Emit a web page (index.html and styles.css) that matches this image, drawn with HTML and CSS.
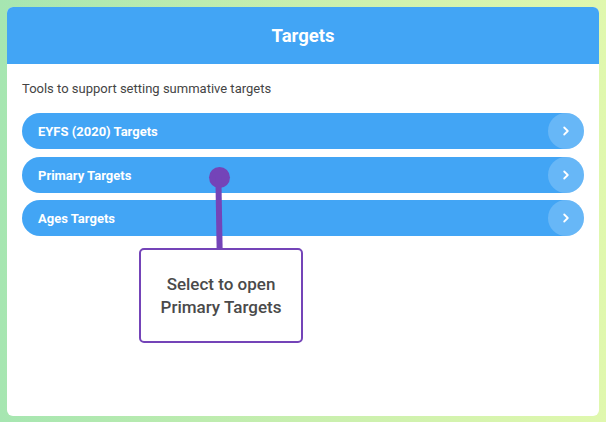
FILE: index.html
```html
<!DOCTYPE html>
<html lang="en">
<head>
    <meta charset="UTF-8">
    <title>Targets</title>
    <link rel="stylesheet" href="styles.css">
</head>
<body>
    <div class="card">
        <div class="card-header">Targets</div>
        <div class="card-body">
            <p class="intro">Tools to support setting summative targets</p>
            <div class="target-list">
                <a class="target-btn" href="#">
                    <span>EYFS (2020) Targets</span>
                    <span class="chevron"><svg width="12" height="12" viewBox="0 0 12 12"><path d="M4.2 2.5 L7.8 6 L4.2 9.5" fill="none" stroke="white" stroke-width="1.8" stroke-linecap="round" stroke-linejoin="round"/></svg></span>
                </a>
                <a class="target-btn" href="#">
                    <span>Primary Targets</span>
                    <span class="chevron"><svg width="12" height="12" viewBox="0 0 12 12"><path d="M4.2 2.5 L7.8 6 L4.2 9.5" fill="none" stroke="white" stroke-width="1.8" stroke-linecap="round" stroke-linejoin="round"/></svg></span>
                </a>
                <a class="target-btn" href="#">
                    <span>Ages Targets</span>
                    <span class="chevron"><svg width="12" height="12" viewBox="0 0 12 12"><path d="M4.2 2.5 L7.8 6 L4.2 9.5" fill="none" stroke="white" stroke-width="1.8" stroke-linecap="round" stroke-linejoin="round"/></svg></span>
                </a>
            </div>
        </div>

        <!-- callout pointing at Primary Targets -->
        <div class="pin-dot"></div>
        <div class="pin-line"></div>
        <div class="callout">Select to open<br>Primary Targets</div>
    </div>
</body>
</html>
```

FILE: styles.css
```css
body {
    margin: 0;
    padding: 7px;
    height: 422px;
    box-sizing: border-box;
    background: linear-gradient(90deg, #a6e6b1 0%, #c8efae 50%, #e0f8ae 100%);
    font-family: Roboto, "Liberation Sans", sans-serif;
}

.card {
    position: relative;
    height: 409px;
    background-color: #fff;
    border-radius: 6px;
    overflow: hidden;
}

.card-header {
    height: 57px;
    background-color: #42a5f5;
    color: #fff;
    font-size: 18.5px;
    font-weight: bold;
    display: flex;
    align-items: center;
    justify-content: center;
}

.card-body {
    padding: 16px 15px;
}

.intro {
    margin: 0 0 15px;
    font-size: 13px;
    color: #444;
    line-height: 18px;
}

.target-list {
    display: flex;
    flex-direction: column;
    gap: 8px;
}

.target-list .target-btn + .target-btn + .target-btn {
    margin-top: -1px;
}

.target-btn {
    display: flex;
    align-items: center;
    justify-content: space-between;
    height: 36px;
    border-radius: 18px;
    background-color: #42a5f5;
    color: #fff;
    text-decoration: none;
    font-size: 13px;
    font-weight: bold;
    padding-left: 16px;
}

.chevron {
    width: 36px;
    height: 36px;
    border-radius: 50%;
    background-color: rgba(255, 255, 255, 0.2);
    display: flex;
    align-items: center;
    justify-content: center;
}

.pin-dot {
    position: absolute;
    left: 202px;
    top: 160px;
    width: 21px;
    height: 21px;
    border-radius: 50%;
    background-color: #7444b8;
}

.pin-line {
    position: absolute;
    left: 209px;
    top: 170px;
    width: 6px;
    height: 72px;
    background-color: #7444b8;
    transform: rotate(-1deg);
}

.callout {
    position: absolute;
    left: 132px;
    top: 241px;
    width: 160px;
    height: 91px;
    border: 2px solid #7444b8;
    border-radius: 5px;
    background-color: #fff;
    display: flex;
    align-items: center;
    justify-content: center;
    text-align: center;
    font-size: 17px;
    font-weight: 500;
    line-height: 23px;
    color: #4a4a4a;
}
```
